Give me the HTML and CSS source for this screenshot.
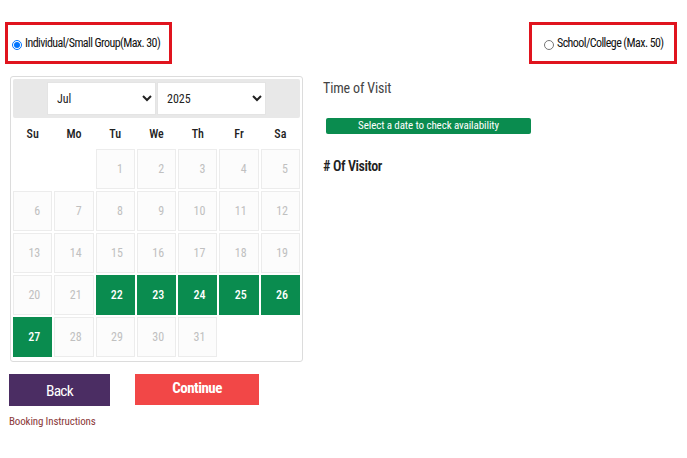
FILE: index.html
```html
<!DOCTYPE html>
<html>
<head>
<meta charset="utf-8">
<link rel="stylesheet" href="styles.css">
</head>
<body>
<div class="page">
  <div class="top">
    <label class="type-box type-a"><input type="radio" name="t" checked><span class="lbl">Individual/Small Group(Max. 30)</span></label>
    <label class="type-box type-b"><input type="radio" name="t"><span class="lbl">School/College (Max. 50)</span></label>
  </div>
  <div class="main">
    <div class="cal">
      <div class="cal-head">
        <select class="sel"><option>Jul</option></select>
        <select class="sel"><option>2025</option></select>
      </div>
      <div class="dow"><span>Su</span><span>Mo</span><span>Tu</span><span>We</span><span>Th</span><span>Fr</span><span>Sa</span></div>
      <div class="days">
        <span class="empty"></span><span class="empty"></span>
        <span class="d">1</span><span class="d">2</span><span class="d">3</span><span class="d">4</span><span class="d">5</span>
        <span class="d">6</span><span class="d">7</span><span class="d">8</span><span class="d">9</span><span class="d">10</span><span class="d">11</span><span class="d">12</span>
        <span class="d">13</span><span class="d">14</span><span class="d">15</span><span class="d">16</span><span class="d">17</span><span class="d">18</span><span class="d">19</span>
        <span class="d">20</span><span class="d">21</span><span class="d on">22</span><span class="d on">23</span><span class="d on">24</span><span class="d on">25</span><span class="d on">26</span>
        <span class="d on">27</span><span class="d">28</span><span class="d">29</span><span class="d">30</span><span class="d">31</span><span class="empty"></span><span class="empty"></span>
      </div>
    </div>
    <div class="side">
      <div class="tov">Time of Visit</div>
      <div class="avail">Select a date to check availability</div>
      <div class="vis"># Of Visitor</div>
    </div>
  </div>
  <div class="actions">
    <button class="btn back">Back</button>
    <button class="btn cont">Continue</button>
  </div>
  <a class="instr" href="#">Booking Instructions</a>
</div>
</body>
</html>
```
FILE: styles.css
```css
* { box-sizing: border-box; }
body { margin: 0; background: #fff; font-family: Roboto, "Liberation Sans", sans-serif; font-stretch: 75%; color: #333; }
.page { padding: 22px 10px 0 9px; }
.top { display: flex; justify-content: space-between; align-items: flex-start; margin-left: -4px; }
.type-box { display: flex; align-items: center; height: 42px; border: 3px solid #e0141e; font-size: 12px; font-weight: 400; letter-spacing: -0.58px; color: #111; white-space: nowrap; }
.type-box input { margin: 3px 3px 0 0; width: 10px; height: 10px; flex: none; }
.type-a { width: 167px; padding-left: 4px; }
.type-b { width: 148px; padding-left: 12px; }
.main { display: flex; margin-top: 12px; }
.cal { width: 293px; border: 1px solid #dcdcdc; border-radius: 3px; padding: 2px 2px 4px 2px; margin-left: 1px; }
.cal-head { display: flex; justify-content: center; gap: 1px; height: 39px; background: #e8e8e8; border-radius: 2px; padding-top: 3px; }
.sel { width: 109px; height: 33px; font-family: Roboto, sans-serif; font-stretch: 75%; font-size: 12px; color: #222; background: #fff; border: 1px solid #e4e4e4; border-radius: 0; padding-left: 5px; }
.dow { display: grid; grid-template-columns: repeat(7, 1fr); column-gap: 2px; height: 31px; align-items: center; text-align: center; font-size: 12px; font-weight: 500; color: #222; }
.days { display: grid; grid-template-columns: repeat(7, 1fr); gap: 2px; grid-auto-rows: 40px; }
.d { display: flex; align-items: center; justify-content: flex-end; padding-right: 11px; border: 1px solid #ececec; background: #fcfcfc; font-size: 12px; color: #c0c0c0; }
.d.on { background: #0a8c4f; border-color: #0a8c4f; color: #fff; font-weight: 500; }
.side { margin-left: 20px; padding-top: 4px; }
.tov { font-size: 14px; color: #444; line-height: 16px; letter-spacing: -0.15px; }
.avail { margin: 22px 0 0 3px; width: 205px; height: 16px; background: #0a8c4f; color: #fff; border-radius: 2px; font-size: 11px; line-height: 16px; text-align: center; letter-spacing: -0.1px; }
.vis { margin-top: 24px; font-size: 14px; font-weight: 600; color: #222; letter-spacing: -0.4px; }
.actions { display: flex; gap: 25px; margin-top: 12px; }
.btn { border: 0; color: #fff; font-family: Roboto, sans-serif; font-stretch: 75%; height: 32px; padding: 0; }
.back { width: 101px; background: #4b2d63; font-size: 15.5px; padding-top: 2px; letter-spacing: -0.8px; }
.cont { width: 124px; height: 31px; background: #f24747; font-size: 15px; font-weight: 700; padding-bottom: 3px; letter-spacing: -0.5px; }
.instr { display: block; margin-top: 9px; font-size: 11px; color: #8b3a3a; text-decoration: none; letter-spacing: -0.15px; }
```
